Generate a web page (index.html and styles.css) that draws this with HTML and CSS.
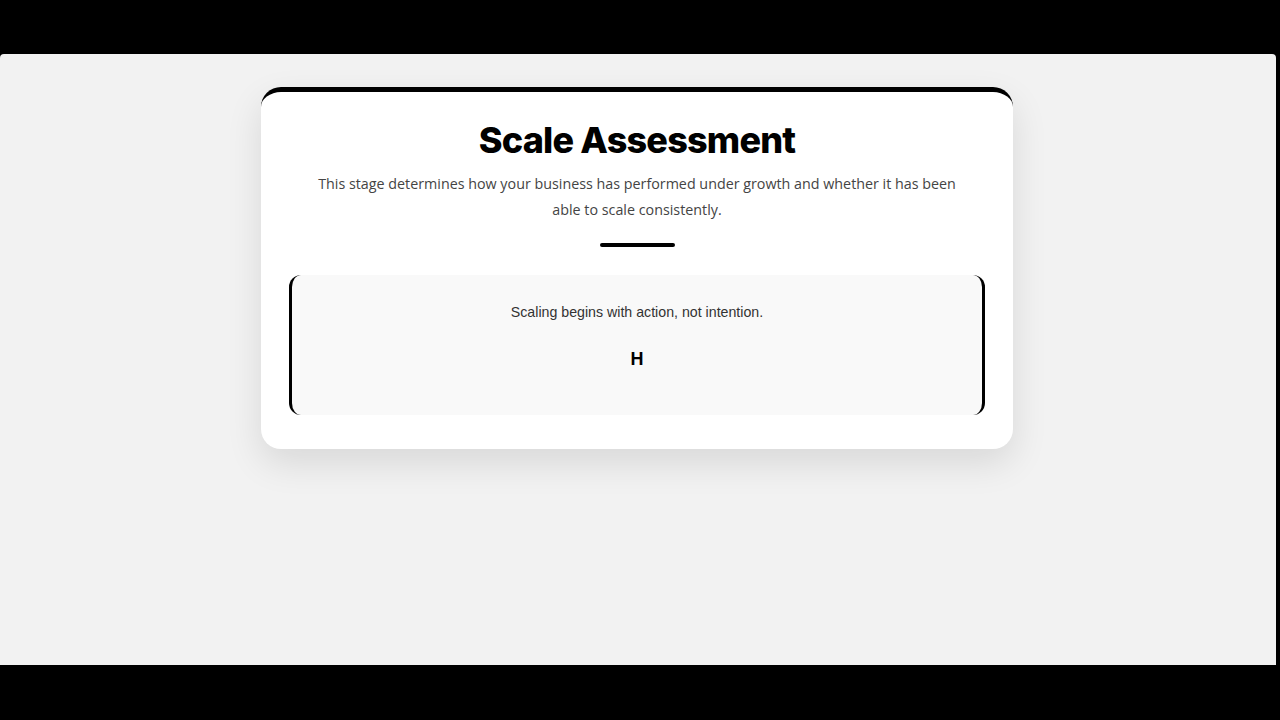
FILE: index.html
```html
<!DOCTYPE html>
<html>
<head>
    <title>Scale Assessment</title>
    <link rel="stylesheet" href="styles.css">
</head>
<body>
    <div class="screen">
        <div class="stage">
            <!-- Tarjeta principal de la etapa -->
            <div class="card">
                <h1>Scale Assessment</h1>
                <p class="intro">This stage determines how your business has performed under growth and whether it has been able to scale consistently.</p>
                <div class="divider"></div>

                <div class="quote-box">
                    <p class="quote">Scaling begins with action, not intention.</p>
                    <div class="typed" id="typed">H</div>
                </div>
            </div>
        </div>
    </div>
</body>
</html>
```

FILE: styles.css
```css
html, body { margin: 0; padding: 0; background: #000; }
.screen { padding-top: 54px; height: 666px; }
.stage { width: 1276px; height: 611px; background: #f2f2f2; border-radius: 4px 4px 0 0; padding: 33px 2px 0 0; box-sizing: border-box; }
.card { width: 752px; margin: 0 auto; background: #fff; border-top: 5px solid #000; border-radius: 20px; padding: 24px 28px 34px; box-sizing: border-box; text-align: center; box-shadow: 0 14px 36px rgba(0, 0, 0, 0.11); }
h1 { margin: 0; font-family: "Inter", sans-serif; font-weight: 800; font-size: 36px; line-height: 48px; color: #000; letter-spacing: -0.8px; }
.intro { max-width: 660px; margin: 7px auto 0; font-family: "Open Sans", sans-serif; font-size: 14.3px; line-height: 26px; color: #444; }
.divider { width: 75px; height: 4px; background: #000; border-radius: 2px; margin: 20px auto 28px; }
.quote-box { background: #f9f9f9; border-left: 3px solid #000; border-right: 3px solid #000; border-radius: 12px; padding: 28px 20px 0; height: 140px; box-sizing: border-box; }
.quote { margin: 0; font-family: "Liberation Sans", Arial, sans-serif; font-size: 14.2px; line-height: 18px; color: #333; }
.typed { margin-top: 27px; font-family: "Liberation Sans", Arial, sans-serif; font-weight: bold; font-size: 18px; line-height: 22px; color: #000; }
```
